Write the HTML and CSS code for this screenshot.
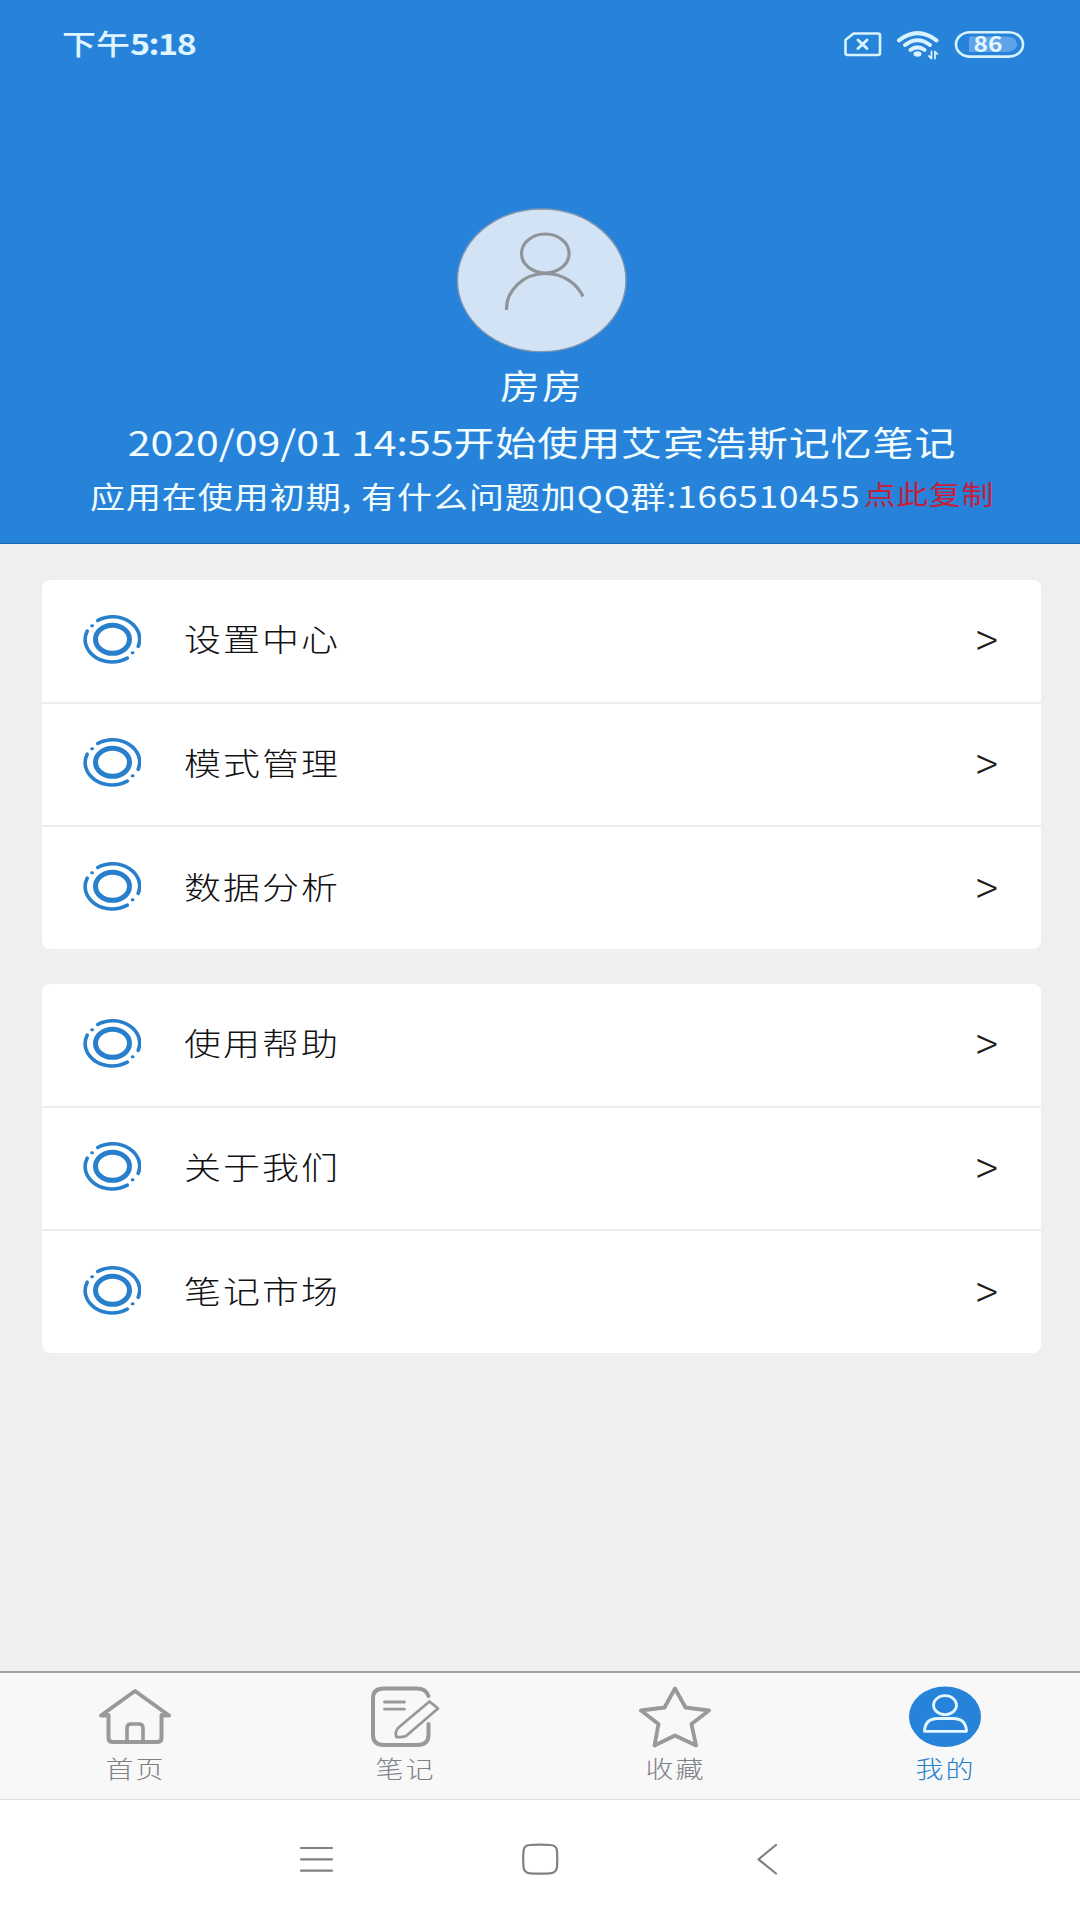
FILE: index.html
```html
<!DOCTYPE html>
<html lang="zh-CN">
<head>
  <meta charset="UTF-8">
  <meta name="viewport" content="width=device-width, initial-scale=1.0">
  <title>我的</title>
  <link rel="stylesheet" href="styles.css">
</head>
<body>
  <svg class="defs" width="0" height="0">
    <symbol id="ring" viewBox="0 0 58 50" preserveAspectRatio="none">
      <ellipse cx="29.500" cy="24.300" rx="17" ry="14" stroke-width="5"/>
      <path d="M14.700 5.500A27 22.300 0 0 1 55.200 31.300" stroke-width="3.6"/>
      <path d="M4.200 16.100A27 22.300 0 0 0 44.300 43.100" stroke-width="3.6"/>
      <path d="M8.700 10.800h.8M49.200 37.800h.8" stroke-width="3"/>
    </symbol>
  </svg>

  <header class="header">
    <div class="status">
      <span class="time">下午<b>5:18</b></span>
      <svg class="status-icons" width="184" height="34" viewBox="842 28 184 34">
        <path d="M853.5 33.5H878a2 2 0 0 1 2 2V53a2 2 0 0 1-2 2H847.500a2 2 0 0 1-2-2V40Z" stroke-width="2.6"/>
        <path d="M858 40l9 8.500M867 40l-9 8.500" stroke-width="3"/>
        <path d="M899 40.300Q917.500 26 936.500 40.300" stroke-width="4"/>
        <path d="M905 45Q917.500 35.500 930 45" stroke-width="4"/>
        <path d="M910.500 49.800Q917.500 45 924.500 49.800" stroke-width="4"/>
        <ellipse cx="917.500" cy="54" rx="4" ry="2.800" class="solid"/>
        <path d="M931.500 51.500v7l-2.500-2.500M935 58.500v-7l2.300 2.500" stroke-width="1.8"/>
        <rect x="956" y="32.200" width="67" height="24.400" rx="14" ry="12.200" stroke-width="2.600"/>
        <path d="M969 36.500H1008Q1017 38 1017 44.300T1008 52H969Z" class="charge"/>
        <text x="973.500" y="51.800" textLength="29" lengthAdjust="spacingAndGlyphs">86</text>
      </svg>
    </div>
    <svg class="avatar" width="172" height="146" viewBox="456 207 172 146">
      <ellipse cx="541.700" cy="280.300" rx="84.300" ry="71.300" class="avatar-bg"/>
      <ellipse cx="545.300" cy="253.500" rx="23.800" ry="19.500"/>
      <path d="M506.500 310C506 291 523 273.500 545.300 273.500 563 273.500 577 283.500 583 296.500"/>
    </svg>
    <div class="name"><span>房房</span></div>
    <div class="since"><span><i>2020/09/01 14:55</i>开始使用艾宾浩斯记忆笔记</span></div>
    <div class="contact">
      <span class="group">应用在使用初期, 有什么问题加QQ群:166510455</span>
      <span class="copy">点此复制</span>
    </div>
  </header>

  <main class="main">
    <ul class="card">
      <li><svg class="icon"><use href="#ring"/></svg><span class="label">设置中心</span><span class="arrow">&gt;</span></li>
      <li><svg class="icon"><use href="#ring"/></svg><span class="label">模式管理</span><span class="arrow">&gt;</span></li>
      <li><svg class="icon"><use href="#ring"/></svg><span class="label">数据分析</span><span class="arrow">&gt;</span></li>
    </ul>
    <ul class="card">
      <li><svg class="icon"><use href="#ring"/></svg><span class="label">使用帮助</span><span class="arrow">&gt;</span></li>
      <li><svg class="icon"><use href="#ring"/></svg><span class="label">关于我们</span><span class="arrow">&gt;</span></li>
      <li><svg class="icon"><use href="#ring"/></svg><span class="label">笔记市场</span><span class="arrow">&gt;</span></li>
    </ul>
  </main>

  <nav class="tabs">
    <a class="tab">
      <svg viewBox="99 1686 72 62">
        <path d="M108.500 1715.500H101L135 1691 169 1715.500H161.500M108.500 1715V1738Q108.500 1742 113 1742H157Q161.500 1742 161.500 1738V1715" stroke-width="4"/>
        <path d="M127 1741V1728Q127 1724 131 1724H139Q143 1724 143 1728V1741" stroke-width="3.600"/>
      </svg>
      <span>首页</span>
    </a>
    <a class="tab">
      <svg viewBox="369 1686 72 62">
        <path d="M428.500 1696Q426 1688.500 417 1688.500H384Q373 1688.500 373 1698V1735Q373 1745 384 1745H417Q428.500 1745 428.500 1735V1724" stroke-width="4"/>
        <path d="M384.500 1702H404.500M384.500 1709.200H404.500" stroke-width="2.800"/>
        <path d="M429.500 1701.500L438 1708.500 406 1736Q402 1737.500 396.500 1737 394.500 1733 398 1728Z" stroke-width="2.800"/>
      </svg>
      <span>笔记</span>
    </a>
    <a class="tab">
      <svg viewBox="639 1686 72 62">
        <path d="M675 1688.500L685.500 1707.500 709 1710.500 691.500 1724 696 1745.500 675 1735.500 654.500 1745.500 658.500 1724 641 1710.500 664.500 1707.500Z" stroke-width="3.800"/>
      </svg>
      <span>收藏</span>
    </a>
    <a class="tab active">
      <svg viewBox="909 1686 72 62">
        <ellipse cx="945" cy="1716.700" rx="36" ry="30.300" class="disc"/>
        <ellipse cx="945" cy="1705.200" rx="11.500" ry="9.500" stroke-width="2.800"/>
        <path d="M924.500 1731.300H966.500Q966 1718.500 953 1718.500H938Q925 1718.500 924.500 1731.300Z" stroke-width="2.800"/>
      </svg>
      <span>我的</span>
    </a>
  </nav>

  <footer class="sysnav">
    <svg width="480" height="34" viewBox="299 1842 480 34">
      <path d="M301 1848H332M301 1859.300H332M301 1870.700H332"/>
      <path d="M530 1845Q540 1844.300 550 1845 556.500 1845 557 1851 557.600 1859 557 1867 556.500 1873 550 1873.300 540 1874 530 1873.300 524 1873 523.500 1867 522.800 1859 523.500 1851 524 1845 530 1845Z"/>
      <path d="M776 1845L758.500 1859.300 776 1873.500"/>
    </svg>
  </footer>
</body>
</html>
```
FILE: styles.css
```css
* {
  box-sizing: border-box;
}

body {
  margin: 0;
  height: 1920px;
  display: flex;
  flex-direction: column;
  background-color: #efefef;
  font-family: "Noto Sans CJK SC", "Noto Sans", sans-serif;
  overflow: hidden;
}

svg {
  display: block;
  fill: none;
  stroke-linecap: round;
  stroke-linejoin: round;
}

.defs {
  height: 0;
}

/* glyphs are wider than they are tall on this screen */
span {
  display: block;
  white-space: nowrap;
  transform: scaleY(0.84);
}

.header {
  height: 544px;
  flex: none;
  padding-left: 4px;
  display: flex;
  flex-direction: column;
  align-items: center;
  background-color: #2783da;
  border-bottom: 1px solid #1a69b5;
  color: #f2fdff;
}

.status {
  width: 100%;
  height: 90px;
  padding: 0 54px 0 58px;
  display: flex;
  justify-content: space-between;
  align-items: center;
}

.time {
  color: #def5ff;
  font-size: 34px;
  font-weight: 500;
  line-height: 44px;
  margin-top: -5px;
}

.time b {
  letter-spacing: -1.5px;
}

.status-icons {
  stroke: #d8f3ff;
}

.status-icons .solid {
  fill: #d8f3ff;
  stroke: none;
}

.status-icons .charge {
  fill: #5ea4e8;
  stroke: none;
}

.status-icons text {
  fill: #e6f8ff;
  stroke: none;
  font-size: 21.5px;
  font-weight: 700;
}

.avatar {
  margin-top: 117px;
  stroke: #8f9499;
  stroke-width: 3.2;
  stroke-linecap: butt;
}

.avatar-bg {
  fill: #d1e3f5;
  stroke: #7f97b0;
  stroke-width: 1.4;
}

.name {
  margin-top: 4px;
  font-size: 40px;
  line-height: 56px;
  letter-spacing: 2px;
}

.since {
  font-size: 41px;
  line-height: 56px;
  letter-spacing: 0.9px;
}

.since i {
  font-style: normal;
  letter-spacing: 0;
}

.contact {
  display: flex;
  gap: 3px;
  line-height: 52px;
}

.group {
  font-size: 35px;
  letter-spacing: 0.95px;
}

.copy {
  margin-top: -2px;
  color: #c4203c;
  font-size: 32px;
  letter-spacing: 0.6px;
}

.main {
  flex: 1;
  padding: 36px 39px 0 42px;
}

.card {
  margin: 0 0 35px;
  padding: 0;
  list-style: none;
  background-color: #fff;
  border-radius: 8px;
}

.card li {
  height: 123.5px;
  padding: 0 43px 2px 41px;
  display: flex;
  align-items: center;
  border-bottom: 2px solid #ededed;
}

.card li:last-child {
  height: 122px;
  border-bottom: none;
}

.icon {
  width: 58px;
  height: 50px;
  stroke: #2880cd;
}

.label {
  flex: 1;
  margin: -3px 0 0 43px;
  color: #111114;
  font-size: 37px;
  font-weight: 300;
  letter-spacing: 2px;
}

.arrow {
  margin-top: -5px;
  color: #1c1c20;
  font-size: 41px;
  font-weight: 300;
  transform: scaleY(1.12);
}

.tabs {
  height: 129px;
  flex: none;
  display: flex;
  background-color: #f8f8f8;
  border-top: 2px solid #a0a0a0;
  border-bottom: 1px solid #dfdfdf;
}

.tab {
  flex: 1;
  padding-top: 13px;
  display: flex;
  flex-direction: column;
  align-items: center;
  color: #7f8287;
  font-size: 28px;
  font-weight: 300;
  line-height: 41px;
}

.tab svg {
  width: 72px;
  height: 62px;
  stroke: #999;
}

.tab span {
  padding-left: 1px;
  letter-spacing: 2px;
}

.tab.active {
  color: #2880cd;
}

.tab.active svg {
  stroke: #e4f9ff;
}

.disc {
  fill: #2783da;
  stroke: none;
}

.sysnav {
  height: 120px;
  flex: none;
  padding: 42px 0 0 299px;
  background-color: #fff;
}

.sysnav svg {
  stroke: #808080;
  stroke-width: 2.2;
}
```
